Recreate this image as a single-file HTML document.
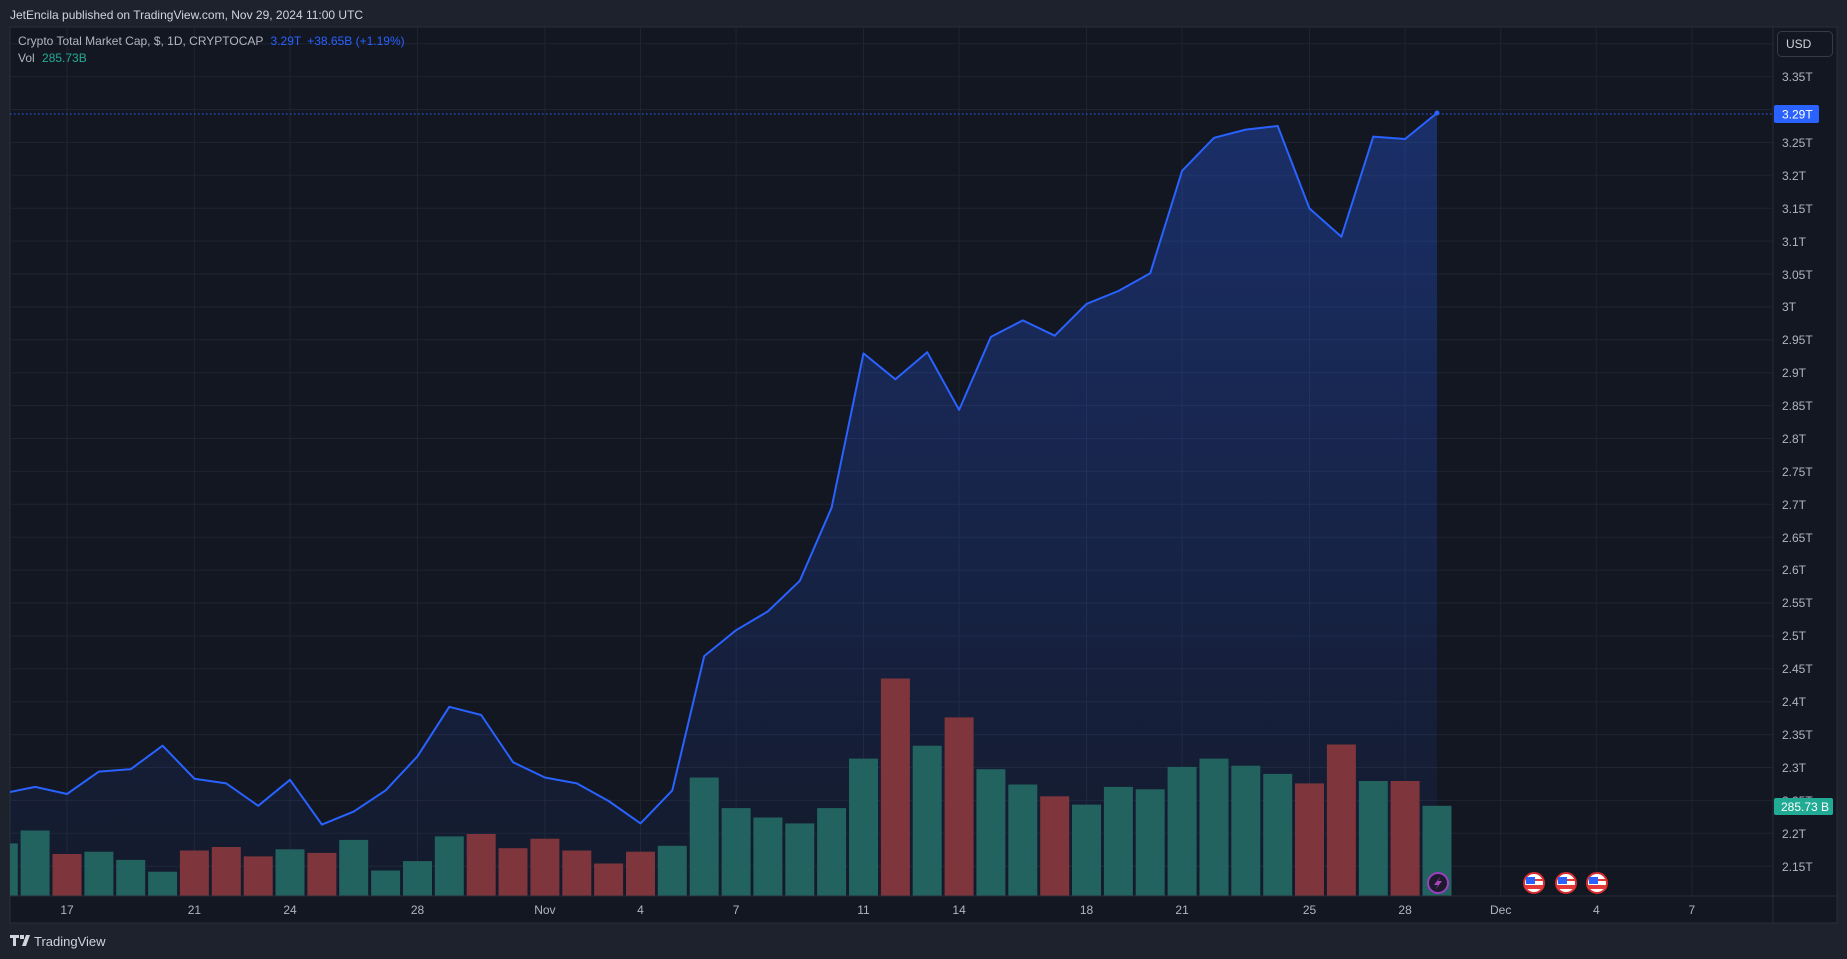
<!DOCTYPE html>
<html><head><meta charset="utf-8"><style>
html,body{margin:0;padding:0;background:#1e222d;width:1847px;height:959px;overflow:hidden;font-family:"Liberation Sans",sans-serif}
svg{position:absolute;left:0;top:0}
</style></head><body>
<svg width="1847" height="959" viewBox="0 0 1847 959" font-family="Liberation Sans, sans-serif">
<defs>
<linearGradient id="ag" x1="0" y1="0" x2="0" y2="1"><stop offset="0" stop-color="#2962ff" stop-opacity="0.32"/><stop offset="1" stop-color="#2962ff" stop-opacity="0.04"/></linearGradient>
<clipPath id="cp"><rect x="10" y="27" width="1763" height="869"/></clipPath>
</defs>
<rect width="1847" height="959" fill="#1e222d"/>
<rect x="10" y="27" width="1827" height="896" fill="#131722" stroke="#2a2e39"/>
<g stroke="#1f2431" stroke-width="1" clip-path="url(#cp)">
<path d="M10 43.7H1773M10 76.6H1773M10 109.5H1773M10 142.4H1773M10 175.3H1773M10 208.2H1773M10 241.1H1773M10 274H1773M10 306.9H1773M10 339.8H1773M10 372.7H1773M10 405.6H1773M10 438.5H1773M10 471.4H1773M10 504.3H1773M10 537.2H1773M10 570.1H1773M10 603H1773M10 635.9H1773M10 668.8H1773M10 701.7H1773M10 734.6H1773M10 767.5H1773M10 800.4H1773M10 833.3H1773M10 866.2H1773"/>
<path d="M67 27V896M194.4 27V896M290 27V896M417.5 27V896M544.9 27V896M640.5 27V896M736.1 27V896M863.5 27V896M959.1 27V896M1086.5 27V896M1182.1 27V896M1309.5 27V896M1405.1 27V896M1500.7 27V896M1596.3 27V896M1691.9 27V896"/>
</g>
<g clip-path="url(#cp)">
<path fill="url(#ag)" d="M10 792 L35.1 786.9 L67 794 L98.9 771.6 L130.7 769.2 L162.6 745.7 L194.4 778.7 L226.3 783.4 L258.2 805.8 L290 779.8 L321.9 824.6 L353.7 811.6 L385.6 790.4 L417.5 756.3 L449.3 706.8 L481.2 715 L513 762.2 L544.9 777.5 L576.8 783.4 L608.6 801 L640.5 823.4 L672.3 790.4 L704.2 656.1 L736.1 630.2 L767.9 611.4 L799.8 580.8 L831.6 507.7 L863.5 353.4 L895.4 379.3 L927.2 352.2 L959.1 409.9 L990.9 336.9 L1022.8 320.4 L1054.7 335.7 L1086.5 303.9 L1118.4 291 L1150.2 273.3 L1182.1 170.8 L1214 137.8 L1245.8 129.6 L1277.7 126 L1309.5 208.5 L1341.4 236.8 L1373.3 136.6 L1405.1 139 L1437 113 L1437 896 L10 896Z"/>
<g fill="#22625f">
<rect x="10" y="843.4" width="7.8" height="52.6"/>
<rect x="20.6" y="830.5" width="29" height="65.5"/>
<rect x="84.4" y="851.7" width="29" height="44.3"/>
<rect x="116.2" y="859.9" width="29" height="36.1"/>
<rect x="148.1" y="871.7" width="29" height="24.3"/>
<rect x="275.5" y="849.3" width="29" height="46.7"/>
<rect x="339.2" y="839.9" width="29" height="56.1"/>
<rect x="371.1" y="870.5" width="29" height="25.5"/>
<rect x="403" y="861.1" width="29" height="34.9"/>
<rect x="434.8" y="836.4" width="29" height="59.6"/>
<rect x="657.8" y="845.8" width="29" height="50.2"/>
<rect x="689.7" y="777.5" width="29" height="118.5"/>
<rect x="721.6" y="808.1" width="29" height="87.9"/>
<rect x="753.4" y="817.5" width="29" height="78.5"/>
<rect x="785.3" y="823.4" width="29" height="72.6"/>
<rect x="817.1" y="808.1" width="29" height="87.9"/>
<rect x="849" y="758.6" width="29" height="137.4"/>
<rect x="912.7" y="745.7" width="29" height="150.3"/>
<rect x="976.4" y="769.2" width="29" height="126.8"/>
<rect x="1008.3" y="784.5" width="29" height="111.5"/>
<rect x="1072" y="804.6" width="29" height="91.4"/>
<rect x="1103.9" y="786.9" width="29" height="109.1"/>
<rect x="1135.7" y="789.3" width="29" height="106.7"/>
<rect x="1167.6" y="766.9" width="29" height="129.1"/>
<rect x="1199.5" y="758.6" width="29" height="137.4"/>
<rect x="1231.3" y="765.7" width="29" height="130.3"/>
<rect x="1263.2" y="773.9" width="29" height="122.1"/>
<rect x="1358.8" y="781" width="29" height="115"/>
<rect x="1422.5" y="805.8" width="29" height="90.2"/>
</g>
<g fill="#7e353c">
<rect x="52.5" y="854" width="29" height="42"/>
<rect x="179.9" y="850.5" width="29" height="45.5"/>
<rect x="211.8" y="847" width="29" height="49"/>
<rect x="243.7" y="856.4" width="29" height="39.6"/>
<rect x="307.4" y="852.9" width="29" height="43.1"/>
<rect x="466.7" y="834" width="29" height="62"/>
<rect x="498.5" y="848.2" width="29" height="47.8"/>
<rect x="530.4" y="838.7" width="29" height="57.3"/>
<rect x="562.3" y="850.5" width="29" height="45.5"/>
<rect x="594.1" y="863.5" width="29" height="32.5"/>
<rect x="626" y="851.7" width="29" height="44.3"/>
<rect x="880.9" y="678.5" width="29" height="217.5"/>
<rect x="944.6" y="717.4" width="29" height="178.6"/>
<rect x="1040.2" y="796.3" width="29" height="99.7"/>
<rect x="1295" y="783.4" width="29" height="112.6"/>
<rect x="1326.9" y="744.5" width="29" height="151.5"/>
<rect x="1390.6" y="781" width="29" height="115"/>
</g>
<line x1="10" y1="114" x2="1773" y2="114" stroke="#2962ff" stroke-width="1" stroke-dasharray="1.5 2.5"/>
<path fill="none" stroke="#2962ff" stroke-width="2" stroke-linejoin="round" d="M10 792 L35.1 786.9 L67 794 L98.9 771.6 L130.7 769.2 L162.6 745.7 L194.4 778.7 L226.3 783.4 L258.2 805.8 L290 779.8 L321.9 824.6 L353.7 811.6 L385.6 790.4 L417.5 756.3 L449.3 706.8 L481.2 715 L513 762.2 L544.9 777.5 L576.8 783.4 L608.6 801 L640.5 823.4 L672.3 790.4 L704.2 656.1 L736.1 630.2 L767.9 611.4 L799.8 580.8 L831.6 507.7 L863.5 353.4 L895.4 379.3 L927.2 352.2 L959.1 409.9 L990.9 336.9 L1022.8 320.4 L1054.7 335.7 L1086.5 303.9 L1118.4 291 L1150.2 273.3 L1182.1 170.8 L1214 137.8 L1245.8 129.6 L1277.7 126 L1309.5 208.5 L1341.4 236.8 L1373.3 136.6 L1405.1 139 L1437 113"/>
<circle cx="1437" cy="113" r="2.5" fill="#2962ff"/>
</g>
<!-- event icons -->
<circle cx="1438" cy="883" r="10" fill="#1e1a2e" stroke="#9c3fbf" stroke-width="2"/>
<path d="M1441 876 L1434 885 L1438 885 L1435 890 L1442 881 L1438 881Z" fill="#ab47bc"/>
<g>
<circle cx="1534" cy="883" r="10" fill="#fff" stroke="#d32f2f" stroke-width="2"/>
<path d="M1525 885h18v4h-18z" fill="#e53935"/><rect x="1526" y="877" width="9" height="7" fill="#2962ff"/><path d="M1535 879h8v2h-8z" fill="#e53935"/>
<circle cx="1566" cy="883" r="10" fill="#fff" stroke="#d32f2f" stroke-width="2"/>
<path d="M1557 885h18v4h-18z" fill="#e53935"/><rect x="1558" y="877" width="9" height="7" fill="#2962ff"/><path d="M1567 879h8v2h-8z" fill="#e53935"/>
<circle cx="1597" cy="883" r="10" fill="#fff" stroke="#d32f2f" stroke-width="2"/>
<path d="M1588 885h18v4h-18z" fill="#e53935"/><rect x="1589" y="877" width="9" height="7" fill="#2962ff"/><path d="M1598 879h8v2h-8z" fill="#e53935"/>
</g>
<!-- axes -->
<line x1="1773" y1="27" x2="1773" y2="923" stroke="#2a2e39"/>
<line x1="10" y1="896" x2="1837" y2="896" stroke="#2a2e39"/>
<g fill="#b2b5be" font-size="12" text-anchor="start">
<text x="1782" y="81">3.35T</text><text x="1782" y="114">3.3T</text><text x="1782" y="147">3.25T</text><text x="1782" y="180">3.2T</text><text x="1782" y="213">3.15T</text><text x="1782" y="246">3.1T</text><text x="1782" y="279">3.05T</text><text x="1782" y="311">3T</text><text x="1782" y="344">2.95T</text><text x="1782" y="377">2.9T</text><text x="1782" y="410">2.85T</text><text x="1782" y="443">2.8T</text><text x="1782" y="476">2.75T</text><text x="1782" y="509">2.7T</text><text x="1782" y="542">2.65T</text><text x="1782" y="574">2.6T</text><text x="1782" y="607">2.55T</text><text x="1782" y="640">2.5T</text><text x="1782" y="673">2.45T</text><text x="1782" y="706">2.4T</text><text x="1782" y="739">2.35T</text><text x="1782" y="772">2.3T</text><text x="1782" y="805">2.25T</text><text x="1782" y="838">2.2T</text><text x="1782" y="871">2.15T</text>
</g>
<rect x="1774" y="105" width="45" height="18" rx="2" fill="#2962ff"/>
<text x="1782" y="118.5" fill="#fff" font-size="12">3.29T</text>
<rect x="1774" y="798" width="59" height="17" rx="2" fill="#22ab94"/>
<text x="1781" y="811" fill="#fff" font-size="12">285.73 B</text>
<rect x="1777.5" y="31.5" width="55" height="25" rx="4" fill="#131722" stroke="#363a45"/>
<text x="1786" y="48" fill="#d1d4dc" font-size="12">USD</text>
<g fill="#b2b5be" font-size="12" text-anchor="middle">
<text x="67" y="914">17</text><text x="194.4" y="914">21</text><text x="290" y="914">24</text><text x="417.5" y="914">28</text><text x="544.9" y="914">Nov</text><text x="640.5" y="914">4</text><text x="736.1" y="914">7</text><text x="863.5" y="914">11</text><text x="959.1" y="914">14</text><text x="1086.5" y="914">18</text><text x="1182.1" y="914">21</text><text x="1309.5" y="914">25</text><text x="1405.1" y="914">28</text><text x="1500.7" y="914">Dec</text><text x="1596.3" y="914">4</text><text x="1691.9" y="914">7</text>
</g>
<!-- header -->
<text x="10" y="19" fill="#d1d4dc" font-size="12">JetEncila published on TradingView.com, Nov 29, 2024 11:00 UTC</text>
<text x="18" y="45" fill="#b2b5be" font-size="12">Crypto Total Market Cap, $, 1D, CRYPTOCAP <tspan fill="#2962ff" dx="4">3.29T</tspan><tspan fill="#2962ff" dx="6">+38.65B (+1.19%)</tspan></text>
<text x="18" y="62" fill="#b2b5be" font-size="12">Vol <tspan fill="#22ab94" dx="4">285.73B</tspan></text>
<!-- footer logo -->
<path d="M10 935h9v3h-3v8h-3v-8h-3z M20 935h4v4h-4z M26 935h4l-4 11h-4z" fill="#d1d4dc"/>
<text x="34" y="946" fill="#d1d4dc" font-size="13">TradingView</text>
</svg>
</body></html>
